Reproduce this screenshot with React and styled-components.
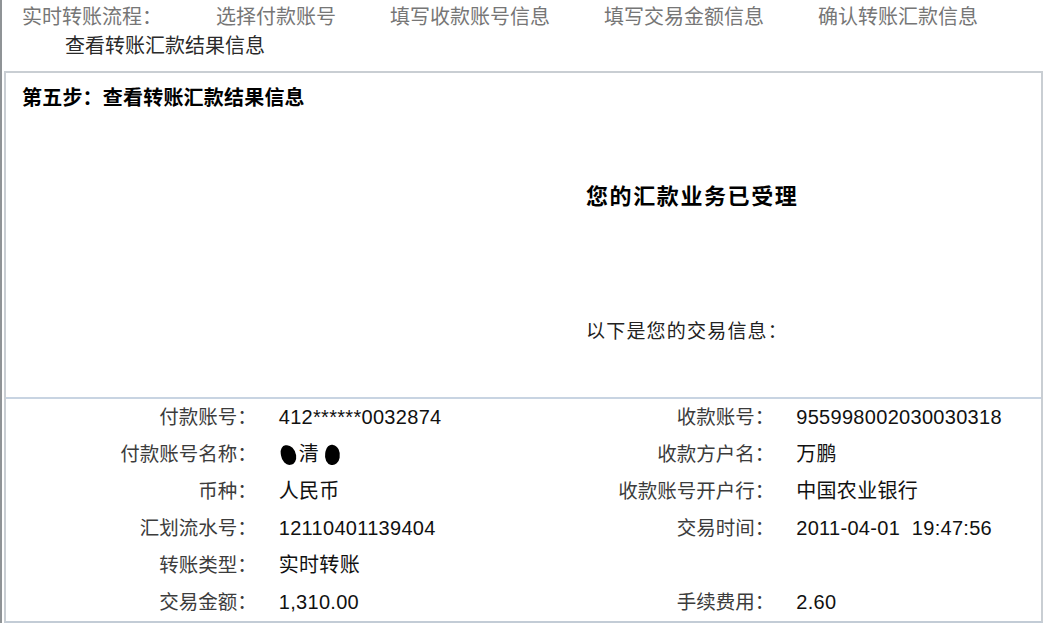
import React from "react";
import styled, { createGlobalStyle } from "styled-components";

const GlobalStyle = createGlobalStyle`
  html, body {
    margin: 0;
    padding: 0;
    background: #fff;
  }
  body {
    font-family: "Liberation Sans", "Noto Sans CJK SC", sans-serif;
    color: #111;
  }
`;

const steps = [
  "选择付款账号",
  "填写收款账号信息",
  "填写交易金额信息",
  "确认转账汇款信息",
  "查看转账汇款结果信息",
];

const rows = [
  ["付款账号：", "412******0032874", "收款账号：", "955998002030030318"],
  ["付款账号名称：", "redacted", "收款方户名：", "万鹏"],
  ["币种：", "人民币", "收款账号开户行：", "中国农业银行"],
  ["汇划流水号：", "12110401139404", "交易时间：", "2011-04-01\u00a0\u00a019:47:56"],
  ["转账类型：", "实时转账", "", ""],
  ["交易金额：", "1,310.00", "手续费用：", "2.60"],
];

const Page = styled.div`
  border-left: 2px solid #8f9396;
  padding: 3px 3px 0 2px;
  min-height: 621px;
  box-sizing: border-box;
`;

const Flow = styled.div`
  padding-left: 18px;
  font-size: 20px;
  line-height: 29px;
  color: #767676;
  margin-bottom: 10px;
`;

const FlowLabel = styled.span`
  display: inline-block;
  margin-right: 11px;
`;

const FlowStep = styled.span`
  display: inline-block;
  margin: 0 11px 0 43px;
  color: ${(p) => (p.$current ? "#2a2a2a" : "#767676")};
`;

const Panel = styled.div`
  border: 2px solid #c9ced3;
  border-bottom-color: #c3ccd6;
`;

const Upper = styled.div`
  height: 324px;
  display: flex;
  flex-direction: column;
`;

const StepTitle = styled.div`
  padding: 12px 0 0 16px;
  font-size: 20px;
  line-height: 26px;
  font-weight: bold;
  letter-spacing: 0.2px;
  color: #000;
`;

const Result = styled.div`
  padding: 71px 0 0 580px;
  display: flex;
  flex-direction: column;
  gap: 105px;
`;

const Accepted = styled.div`
  font-size: 22px;
  line-height: 30px;
  font-weight: bold;
  letter-spacing: 1.6px;
  color: #000;
`;

const Hint = styled.div`
  font-size: 19px;
  line-height: 30px;
  color: #222;
  letter-spacing: 1.2px;
`;

const Table = styled.div`
  border-top: 2px solid #c8d4e2;
  display: grid;
  grid-template-columns: repeat(4, 1fr);
`;

const Label = styled.div`
  height: 37px;
  line-height: 37px;
  text-align: right;
  padding-right: 8px;
  font-size: 19.5px;
  color: #3c3c3c;
  white-space: nowrap;
`;

const Value = styled.div`
  height: 37px;
  line-height: 37px;
  padding-left: 14px;
  font-size: 20px;
  letter-spacing: 0.3px;
  color: #111;
  white-space: nowrap;
  display: flex;
  align-items: center;
`;

const Blot = styled.span`
  display: inline-block;
  width: ${(p) => p.$w}px;
  height: 20px;
  background: #000;
  border-radius: 40% 60% 45% 55%;
  margin: 0 ${(p) => p.$mr}px 0 ${(p) => p.$ml}px;
  transform: rotate(${(p) => p.$r}deg);
`;

const Masked = () => (
  <>
    <Blot $w={15} $ml={2} $mr={3} $r={-8} />
    清
    <Blot $w={15} $ml={6} $mr={0} $r={10} />
  </>
);

export default function App() {
  return (
    <>
      <GlobalStyle />
      <Page>
        <Flow>
          <FlowLabel>实时转账流程：</FlowLabel>
          {steps.map((s, i) => (
            <FlowStep key={s} $current={i === steps.length - 1}>
              {s}
            </FlowStep>
          ))}
        </Flow>
        <Panel>
          <Upper>
            <StepTitle>第五步：查看转账汇款结果信息</StepTitle>
            <Result>
              <Accepted>您的汇款业务已受理</Accepted>
              <Hint>以下是您的交易信息：</Hint>
            </Result>
          </Upper>
          <Table>
            {rows.map((r, i) => (
              <React.Fragment key={i}>
                <Label>{r[0]}</Label>
                <Value>{r[1] === "redacted" ? <Masked /> : r[1]}</Value>
                <Label>{r[2]}</Label>
                <Value>{r[3]}</Value>
              </React.Fragment>
            ))}
          </Table>
        </Panel>
      </Page>
    </>
  );
}
